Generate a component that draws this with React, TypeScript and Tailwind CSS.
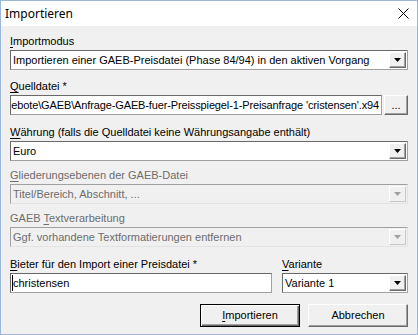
import React from "react";

const font = "font-['Liberation_Sans',Arial,sans-serif] text-[11px]";

const Label: React.FC<{ mn: string; rest: string; pre?: string; disabled?: boolean; className?: string }> = ({
  mn,
  rest,
  pre,
  disabled,
  className,
}) => (
  <div
    className={`h-[14px] leading-[14px] whitespace-nowrap ${disabled ? "text-[#6d6d6d]" : "text-black"} ${className ?? ""}`}
  >
    {pre}
    <span className="underline underline-offset-[2px]">{mn}</span>
    {rest}
  </div>
);

const Arrow: React.FC<{ disabled?: boolean }> = ({ disabled }) => (
  <div
    className={`w-[17px] h-full flex items-center justify-center border ${
      disabled
        ? "bg-[#f0f0f0] border-t-white border-l-white border-r-[#c8c8c8] border-b-[#c8c8c8]"
        : "bg-[#f0f0f0] border-t-white border-l-white border-r-[#696969] border-b-[#696969] shadow-[inset_-1px_-1px_#a0a0a0]"
    }`}
  >
    <svg width="7" height="4" viewBox="0 0 7 4">
      <path d="M0 0h7L3.5 4z" fill={disabled ? "#a0a0a0" : "#000"} />
    </svg>
  </div>
);

const Combo: React.FC<{ value: string; disabled?: boolean; className?: string }> = ({ value, disabled, className }) => (
  <div
    className={`h-[20px] flex border ${
      disabled
        ? "bg-[#f0f0f0] border-[#a0a0a0] border-r-[#e3e3e3] border-b-[#e3e3e3]"
        : "bg-white border-[#696969] border-r-[#a0a0a0] border-b-[#a0a0a0]"
    } ${className ?? ""}`}
  >
    <div
      className={`flex-1 pl-[2px] leading-[18px] whitespace-nowrap overflow-hidden ${
        disabled ? "text-[#6d6d6d]" : "text-black"
      }`}
    >
      {value}
    </div>
    <div className="p-[1px] h-full">
      <Arrow disabled={disabled} />
    </div>
  </div>
);

const boxCls = "h-[20px] bg-white border border-[#696969] border-r-[#a0a0a0] border-b-[#a0a0a0]";

export default function App() {
  return (
    <div className={`w-[418px] h-[335px] border border-[#9cb8d9] bg-[#f0f0f0] flex flex-col ${font}`}>
      <div className="h-[25px] bg-white flex items-center justify-between pl-[4px] pr-[8px]">
        <span className="font-['Noto_Sans',sans-serif] text-[12px] text-black">Importieren</span>
        <svg width="11" height="11" viewBox="0 0 11 11">
          <path d="M0.5 0.5l10 10M10.5 0.5l-10 10" stroke="#000" strokeWidth="1" />
        </svg>
      </div>

      <div className="flex flex-col px-[9px] pt-[8px]">
        <Label mn="I" rest="mportmodus" />
        <Combo className="mt-[2px]" value="Importieren einer GAEB-Preisdatei (Phase 84/94) in den aktiven Vorgang" />

        <Label className="mt-[9px]" mn="Q" rest="uelldatei *" />
        <div className="mt-[2px] flex gap-[2px]">
          <div className={`${boxCls} flex-1 flex justify-end overflow-hidden pr-[2px] leading-[18px] whitespace-nowrap`}>
            <span className="tracking-[-0.13px]">
              C:\Daten\Angebote\GAEB\Anfrage-GAEB-fuer-Preisspiegel-1-Preisanfrage 'cristensen'.x94
            </span>
          </div>
          <div className="w-[24px] h-[20px] border border-t-white border-l-white border-r-[#696969] border-b-[#696969] shadow-[inset_-1px_-1px_#a0a0a0] flex items-end justify-center pb-[3px] leading-none">
            ...
          </div>
        </div>

        <Label className="mt-[10px]" mn="W" rest="ährung (falls die Quelldatei keine Währungsangabe enthält)" />
        <Combo className="mt-[2px]" value="Euro" />

        <Label className="mt-[7px]" mn="G" rest="liederungsebenen der GAEB-Datei" disabled />
        <Combo className="mt-[2px]" value="Titel/Bereich, Abschnitt, ..." disabled />

        <Label className="mt-[7px]" pre="GAEB " mn="T" rest="extverarbeitung" disabled />
        <Combo className="mt-[2px]" value="Ggf. vorhandene Textformatierungen entfernen" disabled />

        <div className="mt-[10px] flex gap-[10px]">
          <div className="flex flex-col w-[262px]">
            <Label mn="B" rest="ieter für den Import einer Preisdatei *" />
            <div className={`${boxCls} mt-[2px] flex items-center pl-[1px] relative`}>
              <span className="absolute left-[1px] top-[1px] w-[1px] h-[16px] bg-black" />
              <span className="leading-[18px] pl-[1px]">christensen</span>
            </div>
          </div>
          <div className="flex flex-col flex-1">
            <Label mn="V" rest="ariante" />
            <Combo className="mt-[2px]" value="Variante 1" />
          </div>
        </div>

        <div className="mt-[11px] flex justify-end gap-[8px]">
          <button className="w-[100px] h-[23px] border border-black bg-[#f0f0f0] shadow-[inset_1px_1px_#fff,inset_-1px_-1px_#696969,inset_-2px_-2px_#a0a0a0]">
            <span className="underline underline-offset-[2px]">I</span>mportieren
          </button>
          <button className="w-[100px] h-[23px] border border-t-white border-l-white border-r-[#696969] border-b-[#696969] bg-[#f0f0f0] shadow-[inset_-1px_-1px_#a0a0a0]">
            Abbrechen
          </button>
        </div>
      </div>
    </div>
  );
}
